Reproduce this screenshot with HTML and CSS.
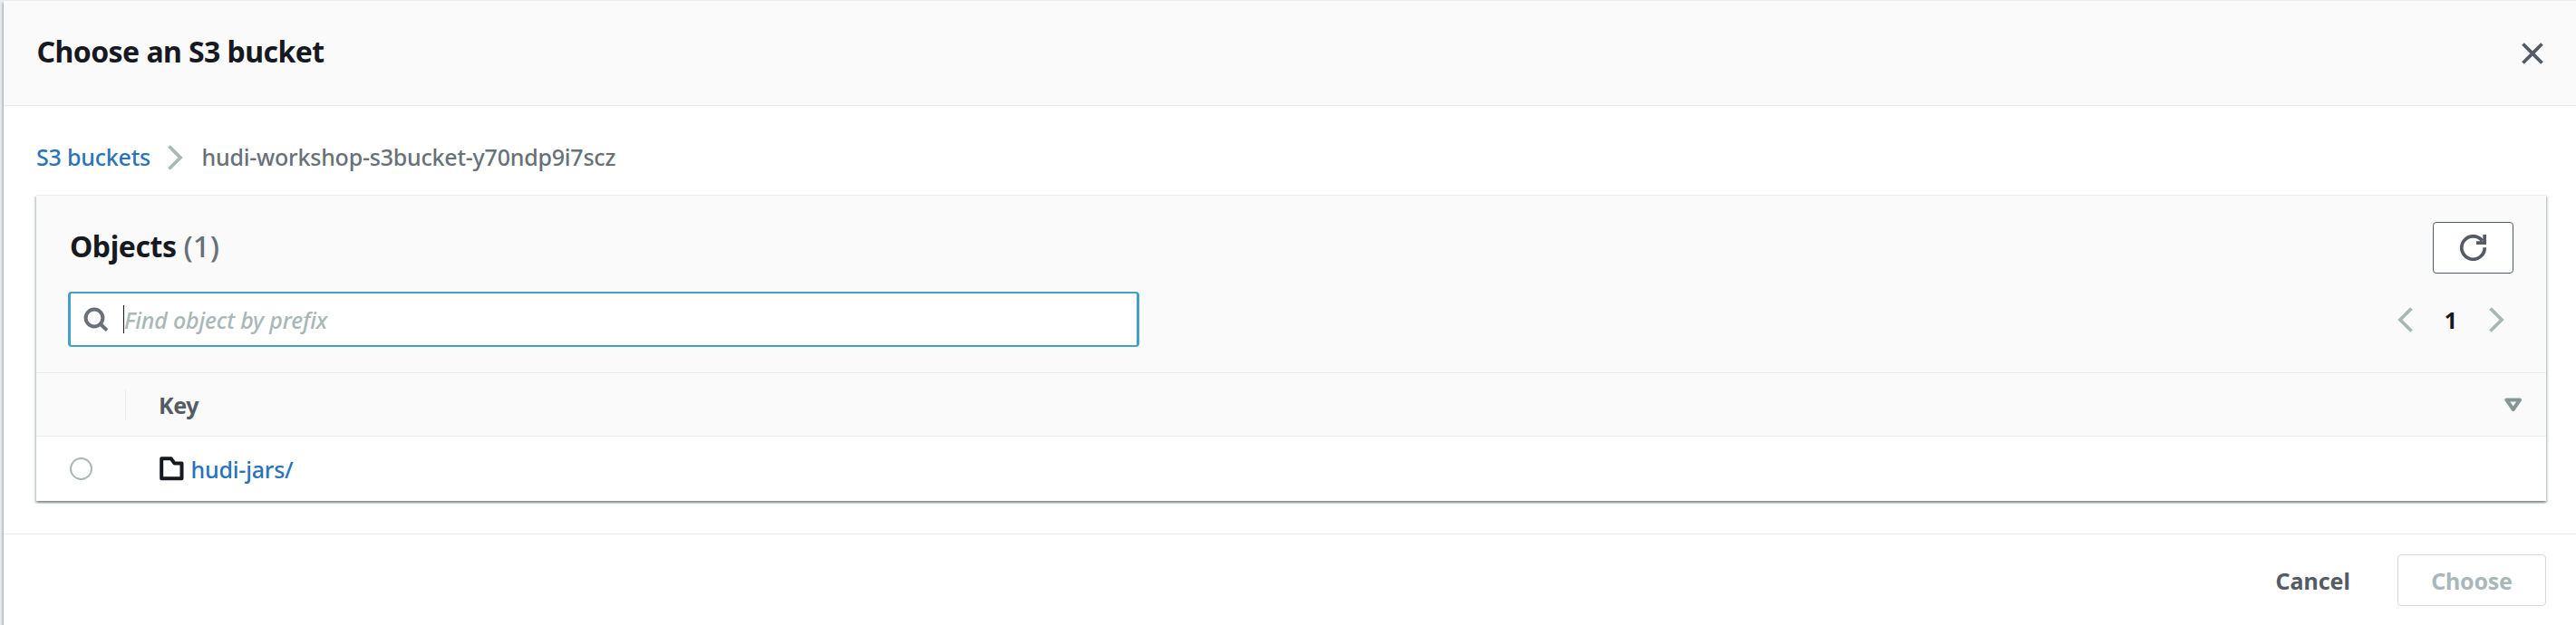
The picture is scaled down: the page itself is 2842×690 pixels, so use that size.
FILE: index.html
```html
<!DOCTYPE html>
<html lang="en">
<head>
<meta charset="utf-8">
<title>Choose an S3 bucket</title>
<link rel="stylesheet" href="styles.css">
</head>
<body>
<div class="modal">
  <header class="modal-header">
    <h1 class="modal-title">Choose an S3 bucket</h1>
    <svg class="close" width="24" height="24" viewBox="0 0 24 24"><path d="M1.5 1.5 22.5 22.5M22.5 1.5 1.5 22.5"/></svg>
  </header>
  <main class="modal-body">
    <nav class="breadcrumb">
      <a class="link">S3 buckets</a>
      <svg class="chevron" width="17" height="28" viewBox="0 0 17 28"><path d="M1.5 1.5 14 14 1.5 26.5"/></svg>
      <span class="current">hudi-workshop-s3bucket-y70ndp9i7scz</span>
    </nav>
    <section class="container">
      <div class="tools">
        <div class="row">
          <h2 class="heading">Objects <span class="count">(1)</span></h2>
          <button class="refresh"><svg width="29" height="29" viewBox="0 0 29 29"><path d="M27.2 14.2A12.7 12.7 0 1 1 24.6 6.8M27.2 0V9.2H18"/></svg></button>
        </div>
        <div class="row filter-row">
          <div class="search">
            <svg width="28" height="28" viewBox="0 0 28 28"><circle cx="12" cy="12" r="9.4"/><path d="M18.5 18.5 26 25.6"/></svg>
            <span class="caret"></span>
            <span class="placeholder">Find object by prefix</span>
          </div>
          <div class="pager">
            <svg class="chevron" width="17" height="28" viewBox="0 0 17 28"><path d="M15.5 1.5 3 14 15.5 26.5"/></svg>
            <b class="page">1</b>
            <svg class="chevron" width="17" height="28" viewBox="0 0 17 28"><path d="M1.5 1.5 14 14 1.5 26.5"/></svg>
          </div>
        </div>
      </div>
      <div class="thead">
        <div class="select-head"></div>
        <div class="key-head">Key</div>
        <svg class="sort" width="20" height="16" viewBox="0 0 20 16"><path d="M2.4 2.4H17.1L9.75 13Z"/></svg>
      </div>
      <div class="trow">
        <span class="radio"></span>
        <svg class="folder" width="27" height="27" viewBox="0 0 27 27"><path d="M2.2 2.2H12.6L16.6 7.6H24.5V24.3H2.2Z"/></svg>
        <a class="link item">hudi-jars/</a>
      </div>
    </section>
  </main>
  <footer class="modal-footer">
    <button class="cancel">Cancel</button>
    <button class="choose">Choose</button>
  </footer>
</div>
</body>
</html>
```
FILE: styles.css
```css
* { box-sizing: border-box; }
body {
  margin: 0;
  height: 690px;
  overflow: hidden;
  background: #e9ecec;
  font: 500 25px/36px "Noto Sans", "Open Sans", sans-serif;
  color: #16191f;
}
svg { display: block; flex: none; fill: none; }
h1, h2 { margin: 0; }
button {
  display: flex;
  align-items: center;
  justify-content: center;
  height: 57px;
  padding: 0;
  border: 1px solid transparent;
  border-radius: 4px;
  background: #fff;
  font: 700 25px/36px "Noto Sans", "Open Sans", sans-serif;
}
.modal {
  height: 720px;
  margin: 1px 0 0 4px;
  background: #fff;
  box-shadow: 0 2px 2px rgba(0, 28, 36, .3), -2px 2px 2px rgba(0, 28, 36, .15);
}
.modal-header {
  display: flex;
  justify-content: space-between;
  height: 116px;
  padding: 34px 36px 0 36.5px;
  background: #fafafa;
  border-bottom: 1px solid #eaeded;
}
.modal-title { font-size: 32px; line-height: 44px; letter-spacing: -.56px; }
.close { margin-top: 11.5px; stroke: #545b64; stroke-width: 3.8; }
.modal-body { padding: 38px 33px 36px 36px; }
.breadcrumb { display: flex; align-items: center; height: 36px; margin-bottom: 24px; }
.link { color: #2a73bb; letter-spacing: -.2px; }
.chevron { stroke: #aab7b8; stroke-width: 3.8; }
.breadcrumb .chevron { margin: 1px 20.5px 0 19px; }
.current { color: #687078; letter-spacing: -.22px; }
.container {
  background: #fff;
  border-top: 1px solid #eaeded;
  box-shadow: 0 2px 2px rgba(0, 28, 36, .3), 2px 2px 2px rgba(0, 28, 36, .15), -2px 2px 2px rgba(0, 28, 36, .15);
}
.tools { height: 196px; padding: 29px 36px 0 35px; background: #fafafa; border-bottom: 1px solid #eaeded; }
.row { display: flex; justify-content: space-between; }
.heading { font-size: 32px; line-height: 53px; letter-spacing: -.45px; margin-left: 2px; }
.count { font-weight: 500; font-size: 33px; letter-spacing: .1px; color: #687078; }
.refresh { width: 89px; border-color: #545b64; }
.refresh svg { stroke: #545b64; stroke-width: 3.7; }
.filter-row { align-items: center; margin-top: 20px; }
.search {
  display: flex;
  align-items: center;
  width: 1182px;
  height: 61px;
  padding-left: 14px;
  border: solid #44a0c8;
  border-width: 2px 3px;
  border-radius: 4px;
  background: #fff;
}
.search svg { stroke: #687078; stroke-width: 4; }
.caret { width: 1px; height: 31px; margin-left: 16px; background: #16191f; }
.placeholder { font-style: italic; color: #aab7b8; letter-spacing: -.17px; }
.pager { display: flex; align-items: center; margin-right: 10px; }
.page { width: 84px; text-align: center; }
.thead { display: flex; align-items: center; height: 70px; background: #fafafa; border-bottom: 1px solid #eaeded; }
.select-head { width: 99px; height: 34px; border-right: 1px solid #eaeded; }
.key-head { flex: 1; margin-left: 36px; font-weight: 700; color: #545b64; letter-spacing: -.4px; }
.sort { margin-right: 26.5px; stroke: #879596; stroke-width: 4; stroke-linejoin: round; }
.trow { display: flex; align-items: center; height: 71px; padding-left: 37px; }
.radio { width: 25px; height: 25px; border: 2px solid #aab7b8; border-radius: 50%; }
.folder { margin-left: 74px; stroke: #16191f; stroke-width: 4; stroke-linejoin: round; }
.item { margin-left: 7.5px; }
.modal-footer {
  display: flex;
  justify-content: flex-end;
  padding: 22px 33px 0 0;
  border-top: 1px solid #eaeded;
}
.cancel { margin-right: 51px; color: #545b64; }
.choose { width: 164px; border-color: #d5dbdb; color: #aab7b8; letter-spacing: -.25px; }
```
